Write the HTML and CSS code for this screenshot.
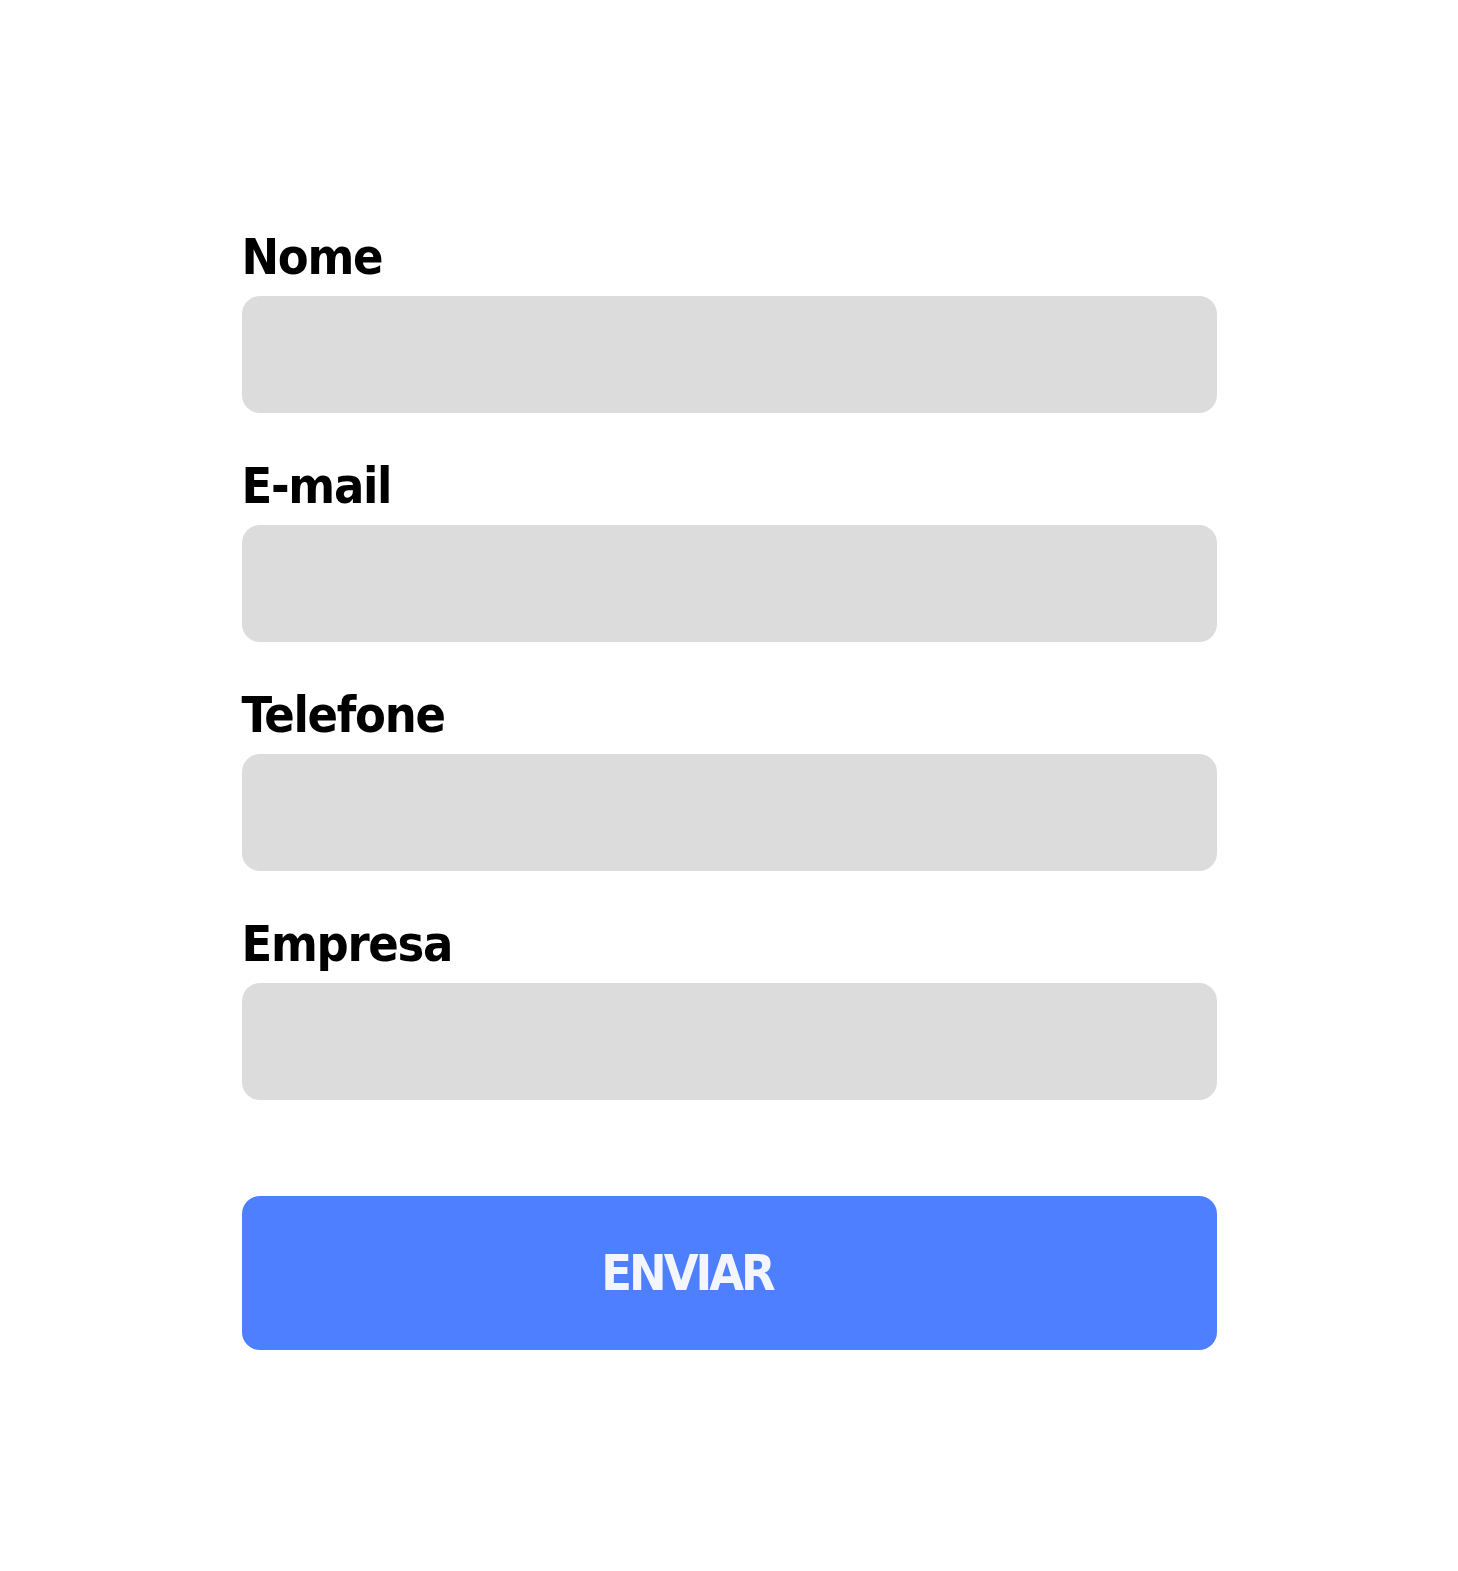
FILE: index.html
```html
<!DOCTYPE html>
<html lang="pt">
<head>
<meta charset="utf-8">
<title>Formulário</title>
<link rel="stylesheet" href="styles.css">
</head>
<body>
<form class="form">
  <div class="field">
    <label class="label" for="nome">Nome</label>
    <input class="input" id="nome" type="text">
  </div>
  <div class="field">
    <label class="label" for="email">E-mail</label>
    <input class="input" id="email" type="email">
  </div>
  <div class="field">
    <label class="label" for="tel">Telefone</label>
    <input class="input" id="tel" type="tel">
  </div>
  <div class="field">
    <label class="label" for="empresa">Empresa</label>
    <input class="input" id="empresa" type="text">
  </div>
  <button class="submit" type="button">ENVIAR</button>
</form>
</body>
</html>
```

FILE: styles.css
```css
* { box-sizing: border-box; }
html, body { margin: 0; padding: 0; background: #ffffff; }
body {
  font-family: "DejaVu Sans Condensed", "DejaVu Sans", sans-serif;
  font-stretch: condensed;
}
.form {
  width: 975px;
  margin: 0 auto;
  padding-top: 229px;
  display: flex;
  flex-direction: column;
  gap: 45px;
}
.field {
  display: flex;
  flex-direction: column;
  gap: 11px;
}
.label {
  display: block;
  height: 56px;
  font-size: 50px;
  line-height: 56px;
  font-weight: 700;
  letter-spacing: -1.3px;
  color: #000;
}
.input {
  display: block;
  width: 100%;
  height: 117px;
  border: 0;
  border-radius: 18px;
  background: #dcdcdc;
  outline: none;
}
.submit {
  margin-top: 51px;
  width: 100%;
  height: 154px;
  border: 0;
  border-radius: 18px;
  background: #4d7fff;
  color: #f4f6ff;
  font-family: inherit;
  font-stretch: condensed;
  font-size: 50px;
  font-weight: 700;
  letter-spacing: -3px;
  padding: 0 84px 0 0;
  display: flex;
  align-items: center;
  justify-content: center;
}
```
